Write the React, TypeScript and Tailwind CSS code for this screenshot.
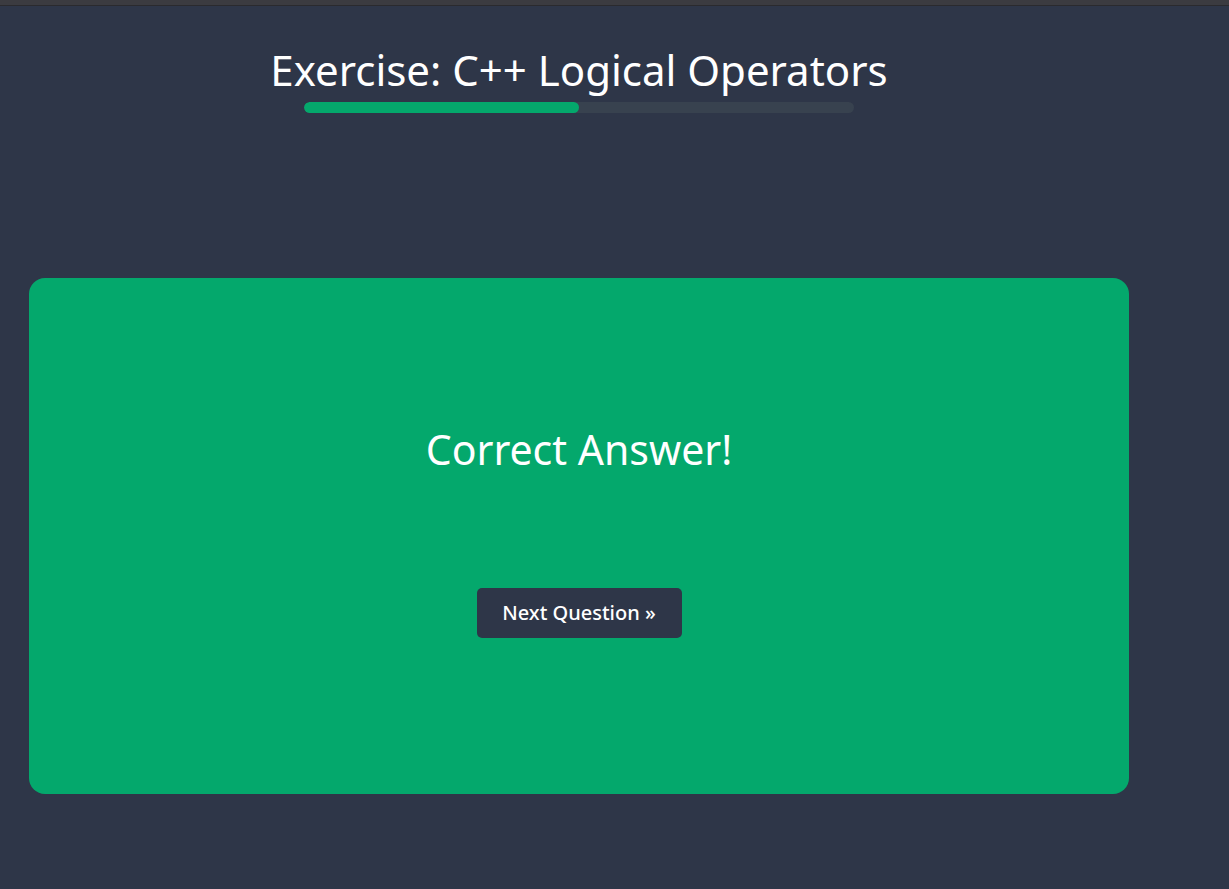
import React from "react";

const App = () => {
  return (
    <div className="min-h-[889px] bg-[#2e3648] text-white" style={{ fontFamily: "'Noto Sans', 'Open Sans', sans-serif" }}>
      <div className="h-[6px] bg-[#3b3b40] border-b border-[#2a2a2e]"></div>
      <div className="w-[1100px] ml-[29px]">
        <div className="flex flex-col items-center pt-[37px]">
          <h1 className="text-[42px] leading-[54px] font-normal">Exercise: C++ Logical Operators</h1>
          <div className="w-[550px] h-[11px] rounded-full bg-[#38424f] mt-[5px] overflow-hidden">
            <div className="w-1/2 h-full rounded-full bg-[#04a86c]"></div>
          </div>
        </div>

        <div className="mt-[165px] h-[516px] rounded-[16px] bg-[#04a86c] flex flex-col items-center pt-[146px]">
          <p className="text-[41px] leading-[50px]">Correct Answer!</p>
          <button className="mt-[114px] w-[205px] h-[50px] rounded-[5px] bg-[#2e3648] text-[20px] font-medium">
            Next Question »
          </button>
        </div>
      </div>
    </div>
  );
};

export default App;
